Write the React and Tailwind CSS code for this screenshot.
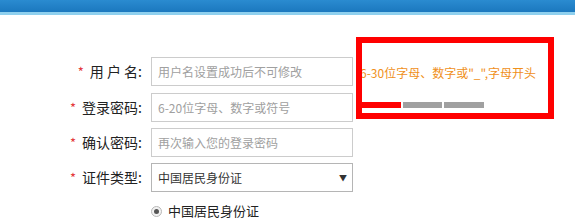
import React from 'react'

const font = { fontFamily: '"Noto Sans CJK SC", "Noto Sans", sans-serif' }

function Label({ text }) {
  return (
    <div className="w-[143px] shrink-0 text-right text-[14px] leading-[29px] text-[#222] pr-[1px]">
      <span className="text-[#e4393c] text-[13px] mr-[6px]">*</span>
      {text}
    </div>
  )
}

function Field({ placeholder }) {
  return (
    <div className="ml-[8px] w-[202px] h-[29px] border border-[#cccccc] bg-white pl-[6px] text-[12px] leading-[27px] text-[#a0a0a0]">
      {placeholder}
    </div>
  )
}

export default function App() {
  return (
    <div className="w-[575px] h-[219px] bg-white overflow-hidden relative" style={font}>
      {/* top bar */}
      <div className="h-[12px] bg-gradient-to-b from-[#2a8bd0] to-[#1b78be]" />
      <div className="h-[3px] bg-[#8fd0ee]" />

      <div className="pt-[40px] flex flex-col gap-[6px]">
        <div className="flex items-center">
          <Label text="用 户 名:" />
          <Field placeholder="用户名设置成功后不可修改" />
          <div className="ml-[7px] mt-[3px] text-[12px] text-[#f0901a] whitespace-nowrap leading-[29px]">
            6-30位字母、数字或"_",字母开头
          </div>
        </div>
        <div className="flex items-center">
          <Label text="登录密码:" />
          <Field placeholder="6-20位字母、数字或符号" />
        </div>
        <div className="flex items-center">
          <Label text="确认密码:" />
          <Field placeholder="再次输入您的登录密码" />
        </div>
        <div className="flex items-center">
          <Label text="证件类型:" />
          <div className="ml-[8px] w-[202px] h-[29px] border border-[#b5b5b5] bg-white pl-[6px] pr-[5px] flex items-center justify-between text-[12px] text-[#333]">
            <span>中国居民身份证</span>
            <span className="text-[8px] text-[#333]">▼</span>
          </div>
        </div>
        <div className="flex items-center mt-[5px] pl-[151px] h-[16px]">
          <span className="w-[11px] h-[11px] rounded-full border border-[#b8b8b8] bg-[#f2f2f2] flex items-center justify-center">
            <span className="w-[5px] h-[5px] rounded-full bg-[#555]" />
          </span>
          <span className="ml-[6px] text-[13px] text-[#222] leading-[16px]">中国居民身份证</span>
        </div>
      </div>

      {/* red annotation box */}
      <div className="absolute left-[356px] top-[37px] w-[198px] h-[82px] border-[6px] border-[#ff0000] pointer-events-none">
        <div className="absolute left-0 top-[59px] flex gap-[2px]">
          <div className="w-[39px] h-[6px] bg-[#ff0000]" />
          <div className="w-[39px] h-[6px] bg-[#a0a0a0]" />
          <div className="w-[40px] h-[6px] bg-[#a0a0a0]" />
        </div>
      </div>
    </div>
  )
}
